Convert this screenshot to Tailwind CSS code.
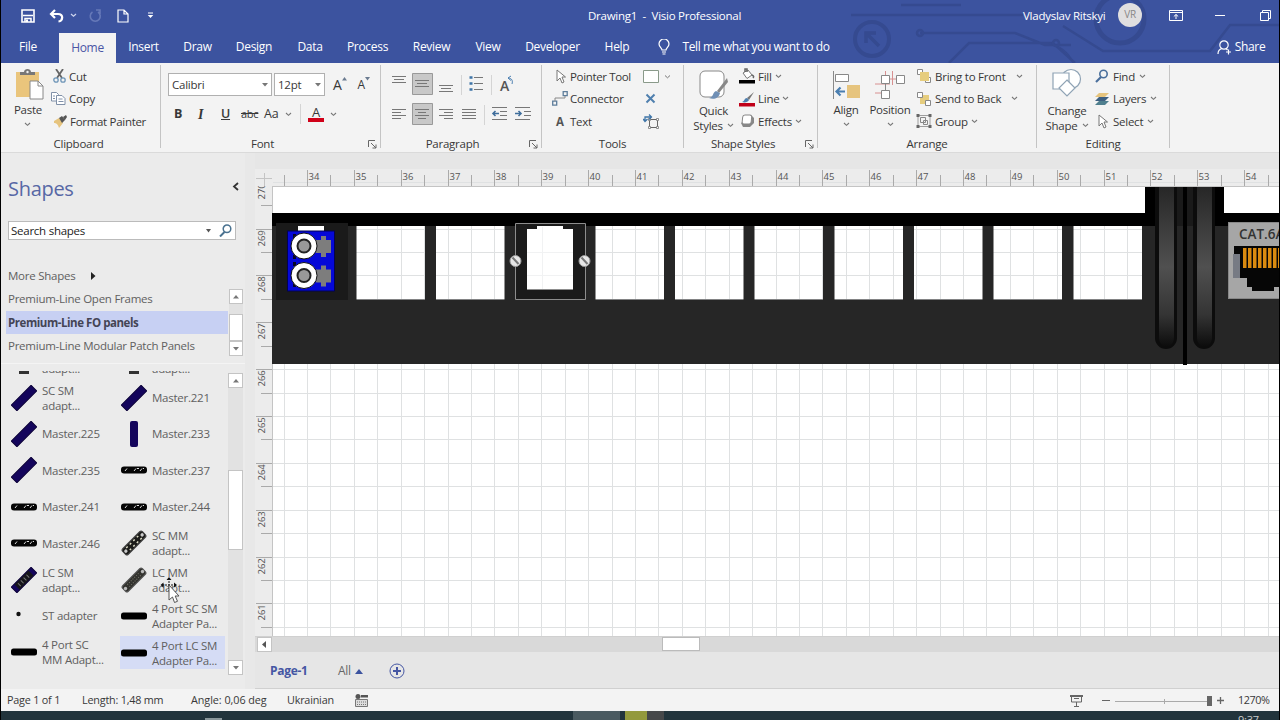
<!DOCTYPE html>
<html lang="en">
<head>
  <meta charset="UTF-8">
  <meta name="viewport" content="width=device-width, initial-scale=1.0">
  <title>Drawing1 - Visio Professional</title>
  <script src="https://cdn.jsdelivr.net/npm/@tailwindcss/browser@4"></script>
</head>
<body class="w-[1280px] h-[720px] overflow-hidden bg-black font-['Open_Sans','Noto_Sans',sans-serif] text-[11.5px] tracking-[-0.25px] text-[#383838]">
  <svg class="hidden">
    <symbol id="chev" viewBox="0 0 7 5"><path d="M1 1l2.500 2.300L6 1" fill="none" stroke="#777" stroke-width="1.100"/></symbol>
    <symbol id="launcher" viewBox="0 0 9 9"><path d="M.5 7V.5H7M3 3l5 5M8 4.500v3.500H4.500" fill="none" stroke="#666"/></symbol>
    <symbol id="blue-bar" viewBox="0 0 26 26"><rect x="-1" y="9" width="28" height="8" fill="#14055c" stroke="#0d0338" transform="rotate(-45 13 13)"/></symbol>
    <symbol id="black-ports" viewBox="0 0 26 26"><rect x="0" y="9.500" width="26" height="7" rx="3" fill="#050505"/><path d="M4 14l2-2.500M13 14l2-2.500M16 11.500h2M19 14l2-2.500M22 11.500h1" stroke="#ddd"/></symbol>
    <symbol id="black-bar" viewBox="0 0 26 26"><rect x="0" y="9.500" width="26" height="7" rx="2.500" fill="#000"/></symbol>
    <symbol id="sc-mm" viewBox="0 0 26 26"><g transform="rotate(-45 13 13)"><rect x="-1" y="9" width="28" height="8" rx="2" fill="#1c1c1a" stroke="#444"/><path d="M4 11h18M5 15h18" stroke="#e0e0c8" stroke-width="1.500" stroke-dasharray="2 3"/><circle cx="1.500" cy="13" r="1.700" fill="#ccc"/><circle cx="24.500" cy="13" r="1.700" fill="#ccc"/></g></symbol>
    <symbol id="lc-mm" viewBox="0 0 26 26"><g transform="rotate(-45 13 13)"><rect x="-1" y="9" width="28" height="8" rx="2" fill="#33332f" stroke="#555"/><path d="M5 11.500h17M5 14.500h17" stroke="#77776c" stroke-dasharray="1 1.500"/><circle cx="1" cy="13" r="1.700" fill="#bbb"/><circle cx="25" cy="13" r="1.700" fill="#bbb"/></g></symbol>
  </svg>

  <div class="ml-px w-[1278px] h-[720px] flex flex-col bg-[#e6e6e6]">

    <!-- Title bar and tabs -->
    <header class="relative h-[63px] shrink-0 bg-[#3c539f] text-white">
      <svg class="absolute left-0 top-0" width="1278" height="63" fill="none" stroke="#354a90" stroke-width="2.500">
        <path d="M850 15h172M900 5h60M919 33h95l30 12h26M948 63l20-20h84l22 20M1062 26l40 25h107l20-26h49"/>
        <path d="M1048 43c8 2 20 8 24 20" stroke-width="1.500"/>
        <circle cx="871" cy="39" r="17" stroke-width="4"/>
        <path d="M878 46l-12-12M865 43v-10h10" stroke-width="3.500"/>
        <circle cx="1119" cy="19" r="24" stroke-width="5"/>
        <circle cx="1055" cy="43" r="3"/><circle cx="919" cy="33" r="3"/>
      </svg>
      <div class="relative h-[31px] flex items-center">
        <svg class="ml-5" width="14" height="14" viewBox="0 0 14 14"><path d="M1 1h12v12H1z" fill="none" stroke="#fff" stroke-width="1.600"/><path d="M2 6.500h10M4 13V9.500h6V13" fill="none" stroke="#fff" stroke-width="1.500"/><path d="M5 10.500h2V13H5z" fill="#fff"/></svg>
        <svg class="ml-[14px]" width="15" height="14" viewBox="0 0 15 14" fill="none" stroke="#fff" stroke-width="2.200"><path d="M6 1L2 5l4 4M2.500 5H9c6 0 5 7 .5 7.500"/></svg>
        <svg class="ml-[6px]" width="7" height="5" viewBox="0 0 7 5" fill="none" stroke="#cdd5ee" stroke-width="1.200"><path d="M1 1l2.500 2.300L6 1"/></svg>
        <svg class="ml-[11px]" width="14" height="14" viewBox="0 0 14 14" fill="none" stroke="#6679b8" stroke-width="1.600"><path d="M4.500 3A5 5 0 1 0 10 3M8 1h4v4"/></svg>
        <svg class="ml-[15px]" width="12" height="14" viewBox="0 0 12 14" fill="none" stroke="#fff" stroke-width="1.200"><path d="M1 1h6l4 4v8H1zM7 1v4h4"/></svg>
        <svg class="ml-[18px]" width="7" height="7" viewBox="0 0 7 7"><path d="M1 .5h5v1H1zM.7 3h5.600L3.500 6z" fill="#fff"/></svg>
        <span class="ml-[434px] w-[435px] whitespace-pre">Drawing1  -  Visio Professional</span>
        <span class="w-[95px] whitespace-nowrap">Vladyslav Ritskyi</span>
        <span class="size-[24px] rounded-full bg-[#e0dfe0] text-[#888] text-[10px] flex items-center justify-center -mt-[2px]">VR</span>
        <svg class="ml-[27px]" width="14" height="11" viewBox="0 0 14 11" fill="none" stroke="#fff"><path d="M.5.5h13v10H.5zM.5 2.500h13M7 9V4.500M4.800 6.500L7 4.500l2.200 2"/></svg>
        <span class="ml-[32px] w-[10px] h-px bg-white"></span>
        <svg class="ml-[35px]" width="11" height="11" viewBox="0 0 11 11" fill="none" stroke="#fff"><path d="M.5 2.500h8v8h-8zM2.500 2.500v-2h8v8h-2"/></svg>
      </div>
      <nav class="relative h-[32px] flex items-stretch text-[12px] tracking-[-0.3px] *:flex *:items-center *:justify-center">
        <span class="w-[54px]">File</span>
        <span class="ml-1 mt-[2px] pb-[1px] w-[57px] bg-[#f3f3f3] text-[#4a55a5]">Home</span>
        <span class="w-[55px]">Insert</span>
        <span class="w-[53px]">Draw</span>
        <span class="w-[60px]">Design</span>
        <span class="w-[52px]">Data</span>
        <span class="w-[63px]">Process</span>
        <span class="w-[65px]">Review</span>
        <span class="w-[48px]">View</span>
        <span class="w-[81px]">Developer</span>
        <span class="w-[48px]">Help</span>
        <span class="ml-[17px] w-[12px]"><svg width="12" height="16" viewBox="0 0 12 16" fill="none" stroke="#fff" stroke-width="1.200"><path d="M4 11c0-2-3-3-3-6a5 5 0 0 1 10 0c0 3-3 4-3 6zM4 13h4M4.500 15h3"/></svg></span>
        <span class="ml-[12px] w-[148px] whitespace-nowrap tracking-[-0.4px]">Tell me what you want to do</span>
        <span class="ml-[387px] w-[15px]"><svg width="15" height="15" viewBox="0 0 15 15" fill="none" stroke="#fff" stroke-width="1.200"><circle cx="7" cy="5" r="4.200"/><path d="M1 14c0-3 2-5 4-5.500M9 8.500l1.500 1.500M11.500 9.500v5M9 12h5"/></svg></span>
        <span class="ml-[3px] w-[30px]">Share</span>
      </nav>
    </header>

    <!-- Ribbon -->
    <section class="h-[90px] shrink-0 flex pt-[2px] pb-[4px] bg-[#f3f3f3] border-b border-[#dadada]">

      <div class="w-[160px] border-r border-[#c4c4c4] flex flex-col">
        <div class="flex h-[68px] shrink-0">
          <div class="w-[52px] flex flex-col items-center">
            <svg class="mt-[4px] ml-1" width="29" height="31" viewBox="0 0 29 31"><path d="M1 3h23v25H1z" fill="#eac57c"/><path d="M5 6V3h4c0-4 7-4 7 0h4v3z" fill="#777"/><circle cx="12.500" cy="3" r="1.200" fill="#eee"/><path d="M15 12h8l5 5v13H15z" fill="#fff" stroke="#888"/><path d="M23 12v5h5" fill="none" stroke="#888"/></svg>
            <span class="mt-[1px] ml-[2px]">Paste</span>
            <svg class="mt-[4px]" width="7" height="5"><use href="#chev"/></svg>
          </div>
          <div class="flex-1 flex flex-col *:h-[22.5px] *:flex *:items-center *:gap-[3px] *:whitespace-nowrap">
            <span><svg width="13" height="14" viewBox="0 0 13 14" fill="none"><path d="M3 0l6 9M10 0L4 9" stroke="#666" stroke-width="1.800"/><circle cx="3" cy="11" r="2.200" stroke="#6f96b8" stroke-width="1.300"/><circle cx="10" cy="11" r="2.200" stroke="#6f96b8" stroke-width="1.300"/></svg>Cut</span>
            <span><svg class="-ml-[2px]" width="15" height="13" viewBox="0 0 15 13" fill="#fff" stroke="#8090a8"><path d="M.5.5h5l2 2V9h-7z"/><path d="M5.500 3.500h5.500l3 3v6H5.500zM7.500 7h4M7.500 9.500h5M2 4h2M2 6.500h2"/></svg>Copy</span>
            <span class="tracking-[-0.3px]"><svg width="14" height="13" viewBox="0 0 14 13"><path d="M1 6l5-3 4 5-4 5C5 9 3 8 1 8z" fill="#e6c47e"/><path d="M6 3l3-2 3 4-3 3zM10 2l3-2 1 2-2 3z" fill="#555"/></svg>Format Painter</span>
          </div>
        </div>
        <span class="text-center leading-[22px] pr-1">Clipboard</span>
      </div>

      <div class="w-[220px] border-r border-[#c4c4c4] flex flex-col">
        <div class="h-[68px] shrink-0 pl-[7px]">
          <div class="flex items-center h-[23px] mt-[8px]">
            <span class="w-[104px] h-[23px] bg-white border border-[#b0b0b0] flex items-center justify-between pl-[3px] pr-[2px]">Calibri<svg width="7" height="4"><path d="M0 0h6L3 3.500z" fill="#777"/></svg></span>
            <span class="ml-[2px] w-[51px] h-[23px] bg-white border border-[#b0b0b0] flex items-center justify-between pl-[3px] pr-[2px]">12pt<svg width="7" height="4"><path d="M0 0h6L3 3.500z" fill="#777"/></svg></span>
            <span class="ml-[8px] text-[14px]">A</span><svg class="-mt-3" width="5" height="4"><path d="M0 3.500h5L2.500 0z" fill="#6b7b90"/></svg>
            <span class="ml-[11px] text-[12px]">A</span><svg class="-mt-3" width="5" height="4"><path d="M0 0h5L2.500 3.500z" fill="#6b7b90"/></svg>
          </div>
          <div class="flex items-center mt-[7px] h-[22px] text-[12.5px]">
            <b class="ml-[6px] w-[24px]">B</b>
            <span class="w-[23px] font-['Liberation_Serif',serif] italic text-[14px] font-bold">I</span>
            <span class="w-[20px] underline font-semibold">U</span>
            <span class="w-[23px] line-through text-[11px]">abc</span>
            <span class="w-[21px]">Aa</span>
            <svg width="7" height="5"><use href="#chev"/></svg>
            <span class="ml-[8px] h-[20px] w-px bg-[#d4d4d4]"></span>
            <span class="ml-[7px] w-[16px] h-[16px] flex items-center justify-center border-b-4 border-[#d00018] text-[13px] leading-none">A</span>
            <svg class="ml-[6px]" width="7" height="5"><use href="#chev"/></svg>
          </div>
        </div>
        <div class="flex items-center leading-[22px]"><span class="flex-1 text-center pr-[4px]">Font</span><svg class="mr-[3px]" width="9" height="9"><use href="#launcher"/></svg></div>
      </div>

      <div class="w-[161px] border-r border-[#c4c4c4] flex flex-col">
        <svg class="h-[68px] shrink-0" width="160" height="68" viewBox="381 65 160 68" fill="none" stroke="#777">
          <path d="M412.500 73.500h20v21h-20zM412.500 103.500h20v21h-20z" fill="#c8c8c8" stroke="#999"/>
          <path d="M392 76.500h14M394 79.500h10M392 82.500h14M415 80.500h14M417 83.500h10M415 86.500h14M439 85.500h14M441 88.500h10M439 91.500h14"/>
          <path d="M392 109.500h14M392 112.500h9M392 115.500h14M392 118.500h9M415 109.500h14M418 112.500h8M415 115.500h14M418 118.500h8M439 109.500h14M444 112.500h9M439 115.500h14M444 118.500h9M462 109.500h14M462 112.500h14M462 115.500h14M462 118.500h14"/>
          <path d="M492 107.500h15M500 111.500h7M500 115.500h7M492 119.500h15M515 107.500h15M524 111.500h7M524 115.500h7M515 119.500h15"/>
          <path d="M499 113.500h-6M495.500 111l-2.500 2.500 2.500 2.500M515 113.500h6M518.500 111l2.500 2.500-2.500 2.500" stroke="#3f6e9c" stroke-width="1.600"/>
          <path d="M474 77.500h9M474 83.500h9M474 89.500h9"/>
          <path d="M469.500 77.500h3M469.500 83.500h3M469.500 89.500h3" stroke="#3f75a8" stroke-width="2.500"/>
          <path d="M461.500 75v20M491.500 75v20M484.500 105v20" stroke="#d4d4d4"/>
          <path d="M508 78c4 0 5 3 4 6M508 78l3-2M508 78l3 2.500" stroke="#4a7eb0"/>
          <text x="500" y="91" fill="#555" stroke="none" font-size="14" font-weight="600">A</text>
        </svg>
        <div class="flex items-center leading-[22px]"><span class="flex-1 text-center pr-[5px]">Paragraph</span><svg class="mr-[3px]" width="9" height="9"><use href="#launcher"/></svg></div>
      </div>

      <div class="w-[142px] border-r border-[#c4c4c4] flex flex-col">
        <div class="flex h-[68px] shrink-0">
          <div class="w-[101px] pl-[10px] flex flex-col *:h-[22.5px] *:flex *:items-center *:whitespace-nowrap">
            <span class="tracking-[-0.35px]"><svg class="ml-[4px] mr-[4px]" width="10" height="15" viewBox="0 0 10 15"><path d="M1 1v11l3-3 2 5 2-1-2-5h3.500z" fill="#fff" stroke="#777"/></svg>Pointer Tool</span>
            <span><svg class="mr-[2px]" width="16" height="15" viewBox="0 0 16 15" fill="none" stroke="#5d7d9b"><path d="M.7 10.200h4v4h-4zM11.200.7h4v4h-4z" stroke-width="1.300"/><path d="M3 10V7h10V5" stroke="#888"/></svg>Connector</span>
            <span><b class="w-[14px] ml-[4px] text-[#555]">A</b>Text</span>
          </div>
          <svg width="40" height="68" viewBox="642 65 40 68" fill="none">
            <path d="M642.500 70.500h15v12h-15z" fill="#fff" stroke="#8a9a8a"/>
            <path d="M664 75.500l2.500 2.300 2.500-2.300" stroke="#777"/>
            <path d="M645.500 94.500l8 8M653.500 94.500l-8 8" stroke="#4f7fae" stroke-width="2"/>
            <path d="M648.500 119.500h8v8h-8z" stroke="#666"/><path d="M647.500 118.500h2v2h-2zM655.500 118.500h2v2h-2zM647.500 126.500h2v2h-2zM655.500 126.500h2v2h-2z" fill="#fff" stroke="#777" stroke-width=".8"/>
            <path d="M644 121v-4h6M642 119l2 2.500 2.500-2.500M648 114.500l2.500 2.500-2.500 2.500" stroke="#3f75a8" stroke-width="1.300"/>
          </svg>
        </div>
        <span class="text-center leading-[22px]">Tools</span>
      </div>

      <div class="w-[134px] border-r border-[#c4c4c4] flex flex-col">
        <div class="flex h-[68px] shrink-0">
          <div class="w-[55px] pl-[4px] flex flex-col items-center leading-[15px]">
            <svg class="mt-[5px]" width="31" height="33" viewBox="0 0 31 33"><rect x="2" y="1" width="24" height="26" rx="5" fill="#fff" stroke="#888"/><path d="M29 8L19 21l2 2 9-11z" fill="#888"/><path d="M18 21c-4 2-2 6-7 7 5 2 10 0 11-5z" fill="#6f8fb5"/></svg>
            <span>Quick</span>
            <span class="flex items-center gap-1 whitespace-nowrap">Styles <svg width="7" height="5"><use href="#chev"/></svg></span>
          </div>
          <div class="flex flex-col *:h-[22.5px] *:flex *:items-center *:gap-[3px] *:whitespace-nowrap">
            <span><svg width="16" height="16" viewBox="0 0 16 16"><path d="M4 5l5-3 4 5-5 3.500z" fill="#fff" stroke="#777"/><path d="M6 4V1h2v3M13 7c2 1 2 2 1 3" fill="none" stroke="#666" stroke-width="1.500"/><path d="M0 12h16v3.500H0z" fill="#000"/></svg>Fill <svg width="7" height="5"><use href="#chev"/></svg></span>
            <span><svg width="16" height="16" viewBox="0 0 16 16"><path d="M15 1L8 7l2 2z" fill="#777"/><path d="M8 7c-3 0-2 3-5 4 3 1 6 0 7-2z" fill="#4f7fae"/><path d="M0 12h16v3.500H0z" fill="#c00018"/></svg>Line <svg width="7" height="5"><use href="#chev"/></svg></span>
            <span><svg width="16" height="14" viewBox="0 0 16 14"><path d="M2 9l2 4h7l4-4V4l-2-2z" fill="#888"/><rect x="3" y="1" width="9" height="9" rx="2" fill="#fff" stroke="#888" transform="skewX(-6) translate(1)"/></svg>Effects <svg width="7" height="5"><use href="#chev"/></svg></span>
          </div>
        </div>
        <div class="flex items-center leading-[22px]"><span class="flex-1 text-center pr-[3px]">Shape Styles</span><svg class="mr-[3px]" width="9" height="9"><use href="#launcher"/></svg></div>
      </div>

      <div class="w-[219px] border-r border-[#c4c4c4] flex flex-col">
        <div class="flex h-[68px] shrink-0">
          <div class="w-[54px] pl-[2px] flex flex-col items-center">
            <svg class="mt-[6px]" width="27" height="29" viewBox="0 0 27 29"><path d="M.5 0v28" stroke="#888"/><path d="M2.500 3.500h13v7h-13z" fill="#fff" stroke="#888"/><path d="M14 14h13v13H14z" fill="#e6c47e"/><path d="M12 20.500H4M7.500 16.500l-4 4 4 4" fill="none" stroke="#4a7eb0" stroke-width="2.200"/></svg>
            <span class="mt-[1px]">Align</span>
            <svg class="mt-[4px]" width="7" height="5"><use href="#chev"/></svg>
          </div>
          <div class="w-[44px] -ml-[4px] flex flex-col items-center">
            <svg class="mt-[6px]" width="30" height="29" viewBox="0 0 30 29" fill="#fff" stroke="#888"><path d="M15 8h7M6 13h9M0 13h6M0 22h6M17.500 0v14M10.500 0v4" stroke="#d89090" fill="none"/><path d="M10.500 12v7" fill="none"/><path d="M6.500 4.500h8v8h-8zM21.500 4.500h8v8h-8zM6.500 19.500h8v8h-8z"/></svg>
            <span class="mt-[1px]">Position</span>
            <svg class="mt-[4px]" width="7" height="5"><use href="#chev"/></svg>
          </div>
          <div class="ml-[4px] flex flex-col *:h-[22.5px] *:flex *:items-center *:gap-[3px] *:whitespace-nowrap">
            <span><svg width="16" height="16" viewBox="0 0 16 16"><path d="M1.500 1.500h5v5h-5zM9.500 9.500h5v5h-5z" fill="#fff" stroke="#888"/><path d="M4 4h9v9H4z" fill="#e6cd7e"/></svg>Bring to Front <svg class="ml-[7px]" width="7" height="5"><use href="#chev"/></svg></span>
            <span><svg width="16" height="16" viewBox="0 0 16 16"><path d="M4 4h9v9H4z" fill="#e6cd7e"/><path d="M1.500 1.500h5v5h-5zM9.500 9.500h5v5h-5z" fill="#fff" stroke="#888"/></svg>Send to Back <svg class="ml-[7px]" width="7" height="5"><use href="#chev"/></svg></span>
            <span><svg width="16" height="16" viewBox="0 0 16 16" fill="none" stroke="#888"><path d="M2 2.500h12v11H2z" stroke-width=".8"/><path d="M4.500 4.500h5v5h-5zM7.500 7.500h4v4h-4z"/><path d="M.5 2.500h3M12.500 2.500h3M.5 13.500h3M12.500 13.500h3" stroke="#666" stroke-width="3"/></svg>Group <svg width="7" height="5"><use href="#chev"/></svg></span>
          </div>
        </div>
        <span class="text-center leading-[22px]">Arrange</span>
      </div>

      <div class="w-[133px] border-r border-[#c4c4c4] flex flex-col">
        <div class="flex h-[68px] shrink-0">
          <div class="w-[57px] pl-[3px] flex flex-col items-center leading-[15px]">
            <svg class="mt-[3px]" width="30" height="30" viewBox="0 0 30 30" fill="#fff" stroke="#8fa3b5" stroke-width="1.200"><circle cx="19" cy="11" r="9.500"/><path d="M1 5h16v16H1z"/><path d="M15 12l8 8-8 8-8-8z"/></svg>
            <span class="mt-[5px]">Change</span>
            <span class="flex items-center gap-1 whitespace-nowrap">Shape <svg width="7" height="5"><use href="#chev"/></svg></span>
          </div>
          <div class="ml-[1px] flex flex-col *:h-[22.5px] *:flex *:items-center *:gap-[4px] *:whitespace-nowrap">
            <span><svg width="14" height="14" viewBox="0 0 14 14" fill="none" stroke="#4a6f9c" stroke-width="1.600"><circle cx="8.500" cy="5" r="3.700"/><path d="M6 8l-5 5" stroke-width="2.200"/></svg>Find <svg width="7" height="5"><use href="#chev"/></svg></span>
            <span><svg width="14" height="14" viewBox="0 0 14 14"><path d="M4 9h10l-4 4H0z" fill="#4f7f8e"/><path d="M4 5h10l-4 4H0z" fill="#3d5f80"/><path d="M4 1h10l-4 4H0z" fill="#e6c47e"/></svg>Layers <svg width="7" height="5"><use href="#chev"/></svg></span>
            <span><svg class="ml-[3px] mr-[1px]" width="10" height="15" viewBox="0 0 10 15"><path d="M1 1v11l3-3 2 5 2-1-2-5h3.500z" fill="#fff" stroke="#777"/></svg>Select <svg width="7" height="5"><use href="#chev"/></svg></span>
          </div>
        </div>
        <span class="text-center leading-[22px]">Editing</span>
      </div>
    </section>

    <!-- Workspace -->
    <main class="h-[536px] shrink-0 flex">

      <aside class="w-[254px] h-[536px] flex flex-col text-[#606060] bg-[#ebebeb] border-r-[10px] border-[#e8e8e8]">
        <div class="h-[68px] pl-[7px] pr-[6px] pt-[3px] flex items-center justify-between">
          <span class="text-[20px] tracking-[-0.3px] text-[#5767a5]">Shapes</span>
          <svg class="-mt-[4px]" width="7" height="9"><path d="M6 1L2 4.500 6 8" fill="none" stroke="#333" stroke-width="1.800"/></svg>
        </div>
        <div class="ml-[7px] w-[228px] h-[19px] bg-white border border-[#bbb] flex items-center text-[#222]">
          <span class="ml-[2px] flex-1">Search shapes</span>
          <svg width="6" height="4"><path d="M0 0h5L2.500 3.500z" fill="#555"/></svg>
          <svg class="ml-[7px] mr-[3px]" width="13" height="13" fill="none" stroke="#4a7290" stroke-width="1.500"><circle cx="8" cy="4.800" r="3.800"/><path d="M5.500 8l-4.500 4.500" stroke-width="2"/></svg>
        </div>
        <div class="mt-[27px] ml-[7px] h-[18px] flex items-center">More Shapes <svg class="ml-[16px]" width="5" height="8"><path d="M0 0v8l4.500-4z" fill="#222"/></svg></div>
        <div class="mt-[2px] h-[71px] flex">
          <div class="ml-[5px] w-[222px] flex flex-col *:h-[23.5px] *:flex *:items-center *:pl-[2px] *:whitespace-nowrap">
            <span>Premium-Line Open Frames</span>
            <span class="bg-[#c7d0f3] font-bold tracking-[-0.45px] text-[#445]">Premium-Line FO panels</span>
            <span>Premium-Line Modular Patch Panels</span>
          </div>
          <div class="ml-[1px] mt-[2px] w-[14px] h-[67px] bg-[#e2e2e2] flex flex-col">
            <span class="h-[15px] bg-white border border-[#c4c4c4] flex items-center justify-center"><svg width="6" height="4"><path d="M0 3.500h6L3 0z" fill="#777"/></svg></span>
            <span class="mt-[10px] h-[27px] bg-white border border-[#c4c4c4]"></span>
            <span class="h-[15px] bg-white border border-[#c4c4c4] flex items-center justify-center"><svg width="6" height="4"><path d="M0 0h6L3 3.500z" fill="#777"/></svg></span>
          </div>
        </div>
        <div class="mt-[5px] h-px bg-[#f4f4f4]"></div>
        <div class="mt-[7px] h-[304px] flex">
          <div class="w-[226px] h-[304px] overflow-hidden">
            <div id="stencil" class="-mt-[28px] ml-[9px] grid grid-cols-[110px_105px] auto-rows-[36.4px] leading-[15px]"></div>
          </div>
          <div class="ml-[1px] mt-[2px] w-[15px] h-[302px] bg-[#e2e2e2] flex flex-col">
            <span class="h-[15px] bg-white border border-[#c4c4c4] flex items-center justify-center"><svg width="6" height="4"><path d="M0 3.500h6L3 0z" fill="#777"/></svg></span>
            <span class="mt-[82px] h-[80px] bg-white border border-[#c4c4c4]"></span>
            <span class="mt-auto h-[15px] bg-white border border-[#c4c4c4] flex items-center justify-center"><svg width="6" height="4"><path d="M0 0h6L3 3.500z" fill="#777"/></svg></span>
          </div>
        </div>
      </aside>

      <div class="w-[1024px] h-[536px] flex flex-col">
        <svg id="canvas" width="1024" height="483" viewBox="255 153 1024 483" class="shrink-0">
          <defs>
            <linearGradient id="guide" x1="0" y1="0" x2="0" y2="1"><stop offset="0" stop-color="#272727"/><stop offset=".5" stop-color="#505050"/><stop offset=".8" stop-color="#343434"/><stop offset="1" stop-color="#0c0c0c"/></linearGradient>
          </defs>
          <rect x="255" y="153" width="1024" height="483" fill="#e6e6e6"/>
          <rect x="255" y="169" width="1024" height="467" fill="#ececec"/>
          <rect x="272" y="186" width="1007" height="450" fill="#fff"/>
          <g id="grid" stroke="#dfe1e2"></g>
          <g id="ruler" stroke="#aaa"></g>
          <g id="labels" fill="#555" font-size="9.500" letter-spacing="0"></g>
          <path d="M255 169h17v17h-17z" fill="#ececec"/>
          <path d="M272 186.500h1007M272.500 186v450M264.500 173v13M256 178.500h16" stroke="#c4c4c4"/>

          <!-- Patch panel body; the openings are cut out so the grid shows through -->
          <rect x="273" y="187" width="1006" height="27" fill="#fff"/>
          <path id="body" fill="#262626" fill-rule="evenodd"/>
          <path d="M272 213h1007v13H272z" fill="#000"/>

          <rect x="276" y="223" width="72" height="77" fill="#1a1a1a"/>
          <rect x="298" y="226" width="26" height="6" fill="#fff"/>
          <rect x="287.500" y="231" width="47" height="60" fill="#0508d8" stroke="#020250"/>
          <path d="M294.500 234v56" stroke="#05052a" stroke-width="3" stroke-dasharray="4 3"/>
          <g id="ports"></g>

          <path d="M515.500 223.500h70v76h-70z" fill="#1b1b1b" stroke="#8d8d8d"/>
          <path d="M527 229h10v-3h26v3h10v60.500h-46z" fill="#fff"/>
          <path d="M542.500 227v62M527 252.500h46M527 275.500h46" stroke="#f1f2f3"/>
          <g fill="#e6e6e6" stroke="#999"><circle cx="515.500" cy="261" r="5.500"/><circle cx="584.500" cy="261" r="5.500"/><path d="M512.500 257.500l6 6.500M581.500 257.500l6 6.500" stroke="#777" stroke-width="2"/></g>

          <!-- Cable guides -->
          <path d="M1145 187h79v26h-79zM1145 213h10v13h-10z" fill="#000"/>
          <rect x="1155" y="187" width="60" height="39" fill="#1a1a1a"/>
          <path d="M1155 187h22v151a11 11 0 0 1-22 0zM1193 187h22v151a11 11 0 0 1-22 0z" fill="#0c0c0c"/>
          <path d="M1159 187h15v150c0 13-15 13-15 0zM1197 187h15v150c0 13-15 13-15 0z" fill="url(#guide)"/>
          <rect x="1183" y="187" width="4" height="178" fill="#000"/>

          <!-- Keystone -->
          <rect x="1228.500" y="222.500" width="51" height="76" fill="#a6a6a6" stroke="#888"/>
          <text x="1239" y="239" font-size="13.500" font-weight="600" fill="#333" letter-spacing="0">CAT.6A</text>
          <path d="M1234 246h45v41h-5v4h-22v-4h-5v-9h-7v-24h-6z" fill="#060606"/>
          <path d="M1233 254h7v24h-7z" fill="#777b84"/>
          <path d="M1243 258h36" stroke="#d98a10" stroke-width="20" stroke-dasharray="3.500 1.500"/>
        </svg>
        <div class="h-[16px] shrink-0 bg-[#d9d9d9] flex border-t border-[#d0d0d0]">
          <span class="ml-[2px] w-[15px] h-[15px] bg-white border border-[#c4c4c4] flex items-center justify-center"><svg width="5" height="7"><path d="M4 0v7L0 3.500z" fill="#555"/></svg></span>
          <span class="ml-[390px] w-[38px] h-[14px] bg-white border border-[#bbb]"></span>
        </div>
        <div class="flex-1 flex items-center pt-[2px] bg-[#e6e6e6] border-b border-[#d0d0d0] text-[12px]">
          <b class="ml-[15px] w-[68px] text-[#4556a3] tracking-[-0.3px]">Page-1</b>
          <span class="text-[#666]">All</span>
          <svg class="ml-[4px]" width="8" height="5"><path d="M0 5h8L4 0z" fill="#3c539f"/></svg>
          <svg class="ml-[26px]" width="16" height="16" fill="none" stroke="#4556a3"><circle cx="8" cy="8" r="7"/><path d="M8 4v8M4 8h8" stroke-width="2"/></svg>
        </div>
      </div>
    </main>

    <!-- Status bar -->
    <footer class="h-[22px] shrink-0 pt-px bg-[#f3f3f3] flex items-center text-[10.8px] tracking-[-0.2px] whitespace-nowrap">
      <span class="ml-[6px] w-[75px]">Page 1 of 1</span>
      <span class="w-[109px]">Length: 1,48 mm</span>
      <span class="w-[96px] tracking-[-0.05px]">Angle: 0,06 deg</span>
      <span class="w-[68px]">Ukrainian</span>
      <svg width="13" height="13" viewBox="0 0 13 13"><circle cx="3" cy="2.500" r="2.500" fill="#555"/><path d="M6 1h7v2.500H6z" fill="#555"/><path d="M.5 5.500h12v7H.5z" fill="#ddd" stroke="#777"/><path d="M2 8h10M2 10.500h10" stroke="#777" stroke-dasharray="1 1"/></svg>
      <svg class="ml-[702px]" width="13" height="12" fill="none" stroke="#666"><path d="M0 1h13" stroke-width="2"/><path d="M1.500 1v6h10V1M6.500 7v4M4 11.500h5M4 3.500h5"/></svg>
      <span class="ml-[19px] w-[8px] h-[1.5px] bg-[#666]"></span>
      <svg class="ml-[5px]" width="98" height="12"><path d="M0 6.500h97M49.500 4v5" stroke="#aaa"/><rect x="92" y="1" width="5" height="10" fill="#666"/></svg>
      <svg class="ml-[3px]" width="9" height="9"><path d="M4.500 1v7M1 4.500h7" stroke="#666" stroke-width="1.300"/></svg>
      <span class="ml-[13px] tracking-[-0.4px]">1270%</span>
    </footer>

    <!-- Taskbar edge -->
    <div class="h-[9px] shrink-0 bg-[#22343c] overflow-hidden flex text-[#ccc] text-[11px] leading-[14px]">
      <span class="ml-[204px] mt-[7px] w-[17px] h-[2px] bg-[#8a979b]"></span>
      <span class="ml-[351px] w-[47px] bg-[#4a5a60]"></span>
      <span class="ml-[5px] w-[22px] bg-[#93993c]"></span>
      <span class="w-[17px] bg-[#46484a]"></span>
      <span class="ml-[574px] mt-[2px]">9:37</span>
    </div>
  </div>

  <!-- Drag cursor -->
  <svg class="absolute left-[160px] top-[576px]" width="20" height="28" viewBox="0 0 20 28"><path d="M9 2v13M2 9h14" stroke="#111" stroke-dasharray="2 1"/><path d="M6.500 4L9 1l2.500 3zM3.500 6.500L.5 9l3 2.500zM14 6.500l3 2.500-3 2.500z" fill="#111"/><path d="M9 9v15l3.500-3 2 5.500 3-1.200-2.300-5.300H19z" fill="#fff" stroke="#555"/></svg>

  <script>
    const shapes = [
      ['cut', 'adapt...'], ['cut', 'adapt...'],
      ['blue', 'SC SM<br>adapt...'], ['blue', 'Master.221'],
      ['blue', 'Master.225'], ['upright', 'Master.233'],
      ['blue', 'Master.235'], ['ports', 'Master.237'],
      ['ports', 'Master.241'], ['ports', 'Master.244'],
      ['ports', 'Master.246'], ['scmm', 'SC MM<br>adapt...'],
      ['lcsm', 'LC SM<br>adapt...'], ['lcmm', 'LC MM<br>adapt...'],
      ['dot', 'ST adapter'], ['bar', '4 Port SC SM<br>Adapter Pa...'],
      ['bar', '4 Port SC<br>MM Adapt...'], ['bar', '4 Port LC SM<br>Adapter Pa...'],
    ];
    const icons = {
      cut: '<rect x="8" y="19" width="10" height="7" fill="#333"/>',
      blue: '<use href="#blue-bar"/>',
      upright: '<rect x="9" y="0" width="8" height="26" rx="2" fill="#14055c"/>',
      ports: '<use href="#black-ports"/>',
      scmm: '<use href="#sc-mm"/>',
      lcmm: '<use href="#lc-mm"/>',
      lcsm: '<use href="#blue-bar"/><path d="M6 20L20 6" stroke="#15151a" stroke-width="7"/><path d="M8 18L19 7" stroke="#777" stroke-dasharray="1 3" stroke-width="4"/>',
      dot: '<circle cx="7.500" cy="11" r="2.200" fill="#111"/>',
      bar: '<use href="#black-bar"/>',
    };
    document.getElementById('stencil').innerHTML = shapes.map(([icon, label], i) => `
      <div class="flex items-center ${i === shapes.length - 1 ? 'bg-[#d5dcf5] h-[33px] mt-[2px]' : ''}">
        <svg class="ml-[1px] mr-[5px] shrink-0" width="26" height="26" viewBox="0 0 26 26">${icons[icon]}</svg>
        <span class="whitespace-nowrap ${i < 2 ? 'mt-[15px]' : ''}">${label}</span>
      </div>`).join('');

    // The grid and the minor ticks run at half of a ruler unit
    const unit = 46.86;
    let grid = '', ticks = '', labels = '';
    for (let i = -1; i <= 41; i++) {
      const x = Math.round(307 + i * unit / 2) + 0.5;
      if (x > 1278) break;
      grid += `<path d="M${x} 187v449"/>`;
      ticks += `<path d="M${x} ${i % 2 ? 175 : 170}V186"/>`;
      if (i % 2 === 0) labels += `<text x="${x + 1}" y="179.5">${34 + i / 2}</text>`;
    }
    for (let i = -2; i <= 17; i++) {
      const y = Math.round(228.5 + i * unit / 2) + 0.5;
      grid += `<path d="M273 ${y}h1006"/>`;
      if (y > 186) ticks += `<path d="M${i % 2 ? 261 : 256} ${y}H272"/>`;
      if (i % 2 === 0) labels += `<text transform="translate(264.5 ${y + 17}) rotate(-90)">${269 - i / 2}</text>`;
    }
    document.getElementById('grid').innerHTML = grid;
    document.getElementById('ruler').innerHTML = ticks;
    document.getElementById('labels').innerHTML = labels;

    let body = 'M272 213H1279V364H272z';
    [356.5, 436, 595.5, 675, 754.5, 834.5, 914, 993.5, 1073.5].forEach((x) => {
      body += `M${x} 226h68.500v73.500h-68.500z`;
    });
    document.getElementById('body').setAttribute('d', body);

    document.getElementById('ports').innerHTML = [246, 275.5].map((y) => `
      <path d="M316 ${y - 6}h5v-4h5v4h5v13h-5v4h-5v-4h-5z" fill="#7d7d7d"/>
      <circle cx="304" cy="${y}" r="13" fill="#fff" stroke="#111"/>
      <circle cx="304" cy="${y}" r="6.500" fill="#999" stroke="#222" stroke-width="2"/>`).join('');
  </script>
</body>
</html>
